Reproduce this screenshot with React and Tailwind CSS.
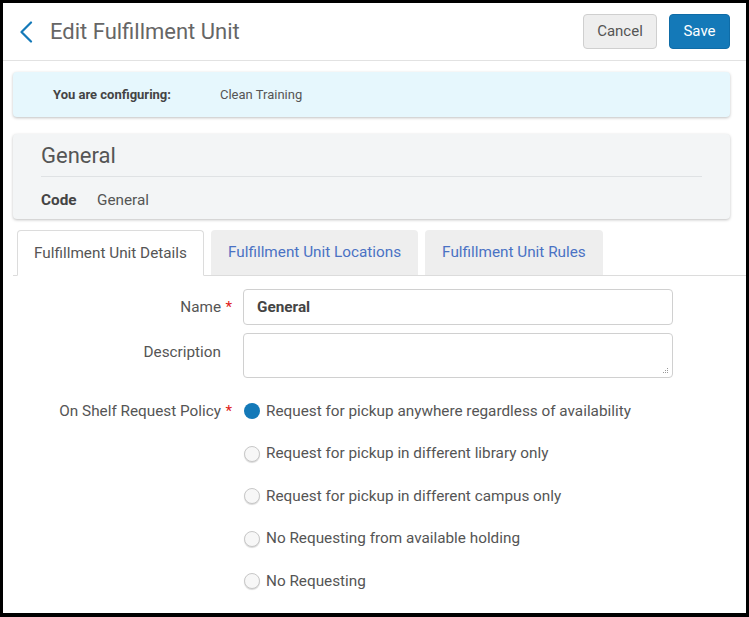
const POLICIES = [
  'Request for pickup anywhere regardless of availability',
  'Request for pickup in different library only',
  'Request for pickup in different campus only',
  'No Requesting from available holding',
  'No Requesting',
];

const TABS = ['Fulfillment Unit Details', 'Fulfillment Unit Locations', 'Fulfillment Unit Rules'];

function Label({ text, required }) {
  return (
    <div className="flex w-[229px] shrink-0 justify-end text-[15.3px] text-[#555]">
      <span>{text}</span>
      <span className="w-[11px] text-right text-[#e02020]">{required ? '*' : ''}</span>
    </div>
  );
}

export default function App() {
  return (
    <div className="h-[617px] w-[749px] bg-black pt-[3px] pl-[3px] pr-[3px] pb-[4px] font-['Roboto',sans-serif]">
      <div className="h-full w-full overflow-hidden bg-white">
        {/* header */}
        <div className="flex h-[58px] items-center border-b border-[#e2e2e2] pr-[16px]">
          <div className="flex flex-1 items-center">
            <svg className="ml-[16px]" width="14" height="22" viewBox="0 0 14 22" fill="none">
              <polyline points="12,1.5 2.5,11 12,20.5" stroke="#1479b8" strokeWidth="2.2" strokeLinecap="round" strokeLinejoin="round" />
            </svg>
            <h1 className="ml-[17px] text-[22px] text-[#666]">Edit Fulfillment Unit</h1>
          </div>
          <div className="flex gap-[12px]">
            <button className="h-[35px] w-[74px] rounded-[4px] border border-[#cfcfcf] bg-[#eeeeee] text-[15px] text-[#555]">Cancel</button>
            <button className="h-[35px] w-[61px] rounded-[4px] border border-[#0f6ca7] bg-[#1479b8] text-[15px] text-white">Save</button>
          </div>
        </div>

        <div className="pl-[10px] pr-[16px] pt-[11px]">
          {/* configuring bar */}
          <div className="flex h-[45px] items-center rounded-[4px] bg-[#e6f7fd] pl-[40px] text-[13px] text-[#444] shadow-[0_1px_3px_rgba(0,0,0,0.25)]">
            <span className="w-[167px] font-bold">You are configuring:</span>
            <span className="text-[#555]">Clean Training</span>
          </div>

          {/* general card */}
          <div className="mt-[17px] h-[85px] rounded-[4px] bg-[#f3f5f6] px-[28px] pt-[8px] shadow-[0_1px_3px_rgba(0,0,0,0.25)]">
            <div className="border-b border-[#dfe2e4] pb-[6px] text-[22px] leading-[28px] text-[#555]">General</div>
            <div className="mt-[12px] flex text-[15.3px] text-[#555]">
              <span className="w-[56px] font-bold text-[#444]">Code</span>
              <span>General</span>
            </div>
          </div>
        </div>

        {/* tabs */}
        <div className="mt-[11px] ml-[10px] flex h-[46px] items-end gap-[7px] border-b border-[#dcdcdc] pl-[4px]">
          {TABS.map((t, i) => (
            <div
              key={t}
              className={
                i === 0
                  ? '-mb-px flex h-[46px] w-[187px] items-center justify-center rounded-t-[4px] border border-b-white border-[#dcdcdc] bg-white text-[15.3px] text-[#555]'
                  : 'flex h-[45px] items-center rounded-t-[4px] bg-[#eeeeee] px-[17px] text-[15.3px] text-[#4a72c4]'
              }
            >
              {t}
            </div>
          ))}
        </div>

        {/* form */}
        <div className="pt-[13px]">
          <div className="flex items-center">
            <Label text="Name" required />
            <div className="ml-[11px] flex h-[36px] w-[430px] items-center rounded-[4px] border border-[#d0d0d0] px-[13px] text-[15.3px] font-bold text-[#444]">
              General
            </div>
          </div>
          <div className="mt-[8px] flex items-start">
            <div className="pt-[8px]">
              <Label text="Description" />
            </div>
            <div className="relative ml-[11px] h-[45px] w-[430px] rounded-[4px] border border-[#d0d0d0]">
              <svg className="absolute right-[3px] bottom-[3px]" width="7" height="7" viewBox="0 0 7 7">
                <rect x="5" y="1" width="1" height="1" fill="#999" />
                <rect x="3" y="3" width="1" height="1" fill="#999" />
                <rect x="5" y="3" width="1" height="1" fill="#999" />
                <rect x="1" y="5" width="1" height="1" fill="#999" />
                <rect x="3" y="5" width="1" height="1" fill="#999" />
                <rect x="5" y="5" width="1" height="1" fill="#999" />
              </svg>
            </div>
          </div>

          <div className="mt-[23px] flex items-start">
            <div className="flex h-[20px] items-center">
              <Label text="On Shelf Request Policy" required />
            </div>
            <div className="ml-[12px] flex flex-col gap-[22.5px]">
              {POLICIES.map((p, i) => (
                <div key={p} className="flex h-[20px] items-center text-[15.3px] text-[#555]">
                  {i === 0 ? (
                    <span className="h-[16px] w-[16px] rounded-full bg-[#1479b8]" />
                  ) : (
                    <span className="h-[16px] w-[16px] rounded-full border border-[#c8c8c8] bg-[#f7f7f7] shadow-[0_1px_1px_rgba(0,0,0,0.15)]" />
                  )}
                  <span className="ml-[6px]">{p}</span>
                </div>
              ))}
            </div>
          </div>
        </div>
      </div>
    </div>
  );
}
